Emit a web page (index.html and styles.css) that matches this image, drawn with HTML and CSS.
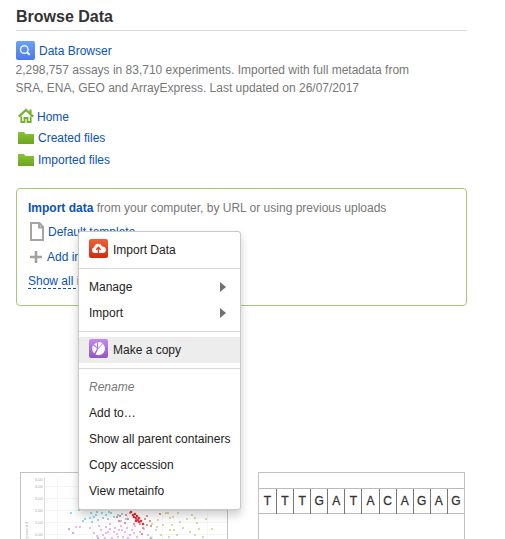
FILE: index.html
```
<!DOCTYPE html>
<html lang="en">
<head>
<meta charset="utf-8">
<title>Browse Data</title>
<link rel="stylesheet" href="styles.css">
</head>
<body>
<main class="page">
  <h1 class="title">Browse Data</h1>
  <div class="browser">
    <svg class="app-icon" viewBox="0 0 19 19"><defs><linearGradient id="blue" x2="0" y2="1"><stop stop-color="#6ba2f5"/><stop offset="1" stop-color="#4b79ed"/></linearGradient></defs><rect width="19" height="19" rx="2" fill="url(#blue)"/><circle cx="8.3" cy="8.5" r="3.8" fill="none" stroke="#eef4ff" stroke-width="1.4"/><path d="M11 11.2l2.7 2.7" stroke="#fff" stroke-width="1.8"/></svg>
    <a class="link">Data Browser</a>
  </div>
  <p class="summary">2,298,757 assays in 83,710 experiments. Imported with full metadata from<br>SRA, ENA, GEO and ArrayExpress. Last updated on 26/07/2017</p>
  <nav class="places">
    <a class="place home"><svg width="16" height="16" viewBox="0 0 16 16"><path d="M.8 8.6L8 2l7.200 6.600M12.500 1.500V5" fill="none" stroke="#74b22b" stroke-width="2.200"/><path d="M3.300 8.500v5.500h3.200v-4h3v4h3.200V8.500" fill="none" stroke="#74b22b" stroke-width="1.800"/></svg>Home</a>
    <a class="place"><svg width="16" height="12" viewBox="0 0 16 12"><defs><linearGradient id="green" x2="0" y2="1"><stop stop-color="#88c434"/><stop offset="1" stop-color="#6da421"/></linearGradient></defs><path d="M0 0h6l1.500 2H16v10H0z" fill="url(#green)"/></svg>Created files</a>
    <a class="place"><svg width="16" height="12" viewBox="0 0 16 12"><path d="M0 0h6l1.500 2H16v10H0z" fill="url(#green)"/></svg>Imported files</a>
  </nav>
  <section class="import-box">
    <p class="import-lead"><a class="link strong">Import data</a> from your computer, by URL or using previous uploads</p>
    <a class="import-row template"><svg width="14" height="19" viewBox="0 0 14 19"><path d="M1 1h8.500L13 5v13H1zM9 1v4.500h4" fill="none" stroke="#a5a5a5" stroke-width="2"/></svg>Default template</a>
    <a class="import-row add"><svg width="12" height="12" viewBox="0 0 12 12"><path d="M6 0v12M0 6h12" stroke="#a3a39e" stroke-width="2.600"/></svg>Add import</a>
    <a class="show-all">Show all imports</a>
    <div class="menu">
      <div class="item"><svg class="app-icon" viewBox="0 0 19 19"><defs><linearGradient id="red" x2="0" y2="1"><stop stop-color="#ed6338"/><stop offset="1" stop-color="#d42a0d"/></linearGradient></defs><rect width="19" height="19" rx="2" fill="url(#red)"/><path d="M5.500 14a2.900 2.900 0 0 1-.3-5.700 4.200 4.200 0 0 1 8-.9 3.300 3.300 0 0 1 .6 6.600z" fill="#fff"/><path d="M9.400 14V9.300M7.200 10.800l2.200-2.500 2.200 2.500" fill="none" stroke="#de421d" stroke-width="1.400"/></svg>Import Data</div>
      <hr>
      <div class="item">Manage<span class="arrow"></span></div>
      <div class="item">Import<span class="arrow"></span></div>
      <hr>
      <div class="item active"><svg class="app-icon" viewBox="0 0 19 19"><defs><linearGradient id="purple" x2="0" y2="1"><stop stop-color="#c58be9"/><stop offset="1" stop-color="#9254c8"/></linearGradient></defs><rect width="19" height="19" rx="2" fill="url(#purple)"/><path d="M9.200 9.800V3.100a6.500 6.500 0 1 1-2.600 12.300z" fill="#fff"/><path d="M8 9.500L4 6.200C2.500 9 3 12.500 5.400 14.600z" fill="#fff"/><path d="M8 8.200L5 5.300 8 3.400z" fill="#fff"/><path d="M9 9.800l4.500-5" stroke="#b47add" stroke-width=".9"/></svg>Make a copy</div>
      <hr>
      <div class="item muted">Rename</div>
      <div class="item">Add to…</div>
      <div class="item">Show all parent containers</div>
      <div class="item">Copy accession</div>
      <div class="item">View metainfo</div>
    </div>
  </section>
  <div class="thumbs">
    <div class="thumb">
      <svg class="scatter" width="206" height="70" viewBox="21 473 206 70">
        <path d="M45 486.500H227M45 498.500H227M45 510.500H227M45 522.500H227M45 534.500H227M57.500 478V543M92.500 478V543M127.500 478V543M162.500 478V543M207.500 478V543" stroke="#f5f5f5"/>
        <path d="M44.500 478V543" stroke="#ddd"/>
        <g class="ticks"><text x="35" y="481">6.00</text><text x="35" y="488">4.00</text><text x="35" y="500">3.00</text><text x="35" y="512">2.00</text><text x="35" y="524">1.00</text><text x="35" y="536">0.00</text><text transform="translate(28 545) rotate(-90)">component 2</text></g>
        <g fill="none" stroke-width="1.900" stroke-linecap="round">
          <path stroke="#6bcbdc" d="M71 513h0M79 510h0M85 519h0M90 518h0M91 513h0M92 522h0M94 517h0M96 515h0M98 520h0M102 513h0M103 518h0M106 515h0M108 519h0M111 513h0M114 517h0M118 515h0M122 514h0M126 519h0M83 521h0M97 512h0M109 512h0M121 521h0"/>
          <path stroke="#ed98dc" d="M76 527h0M80 527h0M90 528h0M94 533h0M97 536h0M101 530h0M103 535h0M106 527h0M108 532h0M110 524h0M112 538h0M115 528h0M117 534h0M119 530h0M121 526h0M123 537h0M125 532h0M127 528h0M130 535h0M132 530h0M135 526h0M137 537h0M140 532h0M144 529h0M99 526h0M105 538h0M114 532h0M128 538h0M148 535h0M110 529h0M118 537h0M122 530h0M106 533h0M134 533h0"/>
          <path stroke="#b58abd" d="M69 529h0M73 533h0M98 538h0"/>
          <path stroke="#cdcb7e" d="M152 524h0M156 530h0M158 520h0M161 535h0M163 525h0M166 513h0M168 513h0M170 518h0M172 525h0M174 530h0M177 535h0M180 522h0M183 528h0M187 519h0M190 532h0M192 515h0M195 535h0M197 523h0M199 529h0M203 537h0M206 519h0M212 529h0M169 537h0M173 517h0M178 513h0M195 518h0M157 527h0M170 530h0"/>
          <path stroke="#e36468" d="M117 517h0M120 516h0M119 521h0M126 515h0M128 519h0M130 513h0M136 520h0M140 524h0M143 528h0M145 519h0M147 525h0M150 521h0M142 534h0M151 526h0M160 514h0M125 523h0M134 524h0M147 516h0"/>
          <path stroke="#dd3038" stroke-width="2.600" d="M131 512h0M133 515h0M134 517h0M136 518h0M138 520h0M135 514h0M137 516h0M139 522h0M141 521h0M143 524h0M139 518h0M136 521h0"/>
          <path stroke="#bbb" stroke-width="3" d="M151 538h0"/>
        </g>
      </svg>
    </div>
    <div class="thumb sequence">
      <div class="bases"><span>T</span><span>T</span><span>T</span><span>G</span><span>A</span><span>T</span><span>A</span><span>C</span><span>A</span><span>G</span><span>A</span><span>G</span></div>
    </div>
  </div>
</main>
</body>
</html>
```
FILE: styles.css
```
* { box-sizing: border-box; }
body {
  margin: 0;
  background: #fff;
  color: #777;
  font: 12px/18px "Liberation Sans", Arial, sans-serif;
}
.page {
  width: 467px;
  height: 539px;
  padding: 7px 0 0 16px;
  overflow: hidden;
}
.title {
  height: 24px;
  margin: 0;
  border-bottom: 1px solid #d9d9d9;
  color: #333;
  font-size: 16px;
  line-height: 20px;
}
.browser {
  display: flex;
  align-items: center;
  height: 19px;
  margin-top: 10px;
  gap: 4px;
}
.app-icon { width: 19px; height: 19px; flex: none; }
.item .app-icon { margin-bottom: 3px; }
.link, .place, .import-row, .show-all { color: #0b52b5; }
.strong { font-weight: bold; }
.summary { margin: 1px 0 0 -0.5px; white-space: nowrap; }
.places { margin: 9px 0 0 2px; }
.place {
  display: flex;
  align-items: center;
  gap: 4px;
  height: 22px;
}
.place svg { margin-bottom: 1px; }
.home { gap: 3px; height: 21px; }
.import-box {
  position: relative;
  display: flex;
  flex-direction: column;
  align-items: flex-start;
  height: 118px;
  margin-top: 17px;
  padding: 10px 11px;
  border: 1px solid #a3ca75;
  border-radius: 4px;
}
.import-lead { margin: 0; }
.import-row { display: flex; align-items: center; white-space: nowrap; }
.template { height: 24px; margin: 3px 0 0 2px; gap: 4px; }
.template svg { margin-bottom: 2px; }
.add { height: 24px; margin: 1px 0 0 2px; gap: 5px; }
.add svg { margin-bottom: 1px; }
.show-all {
  height: 16px;
  margin-top: 4px;
  border-bottom: 1px dashed #0b52b5;
  line-height: 16px;
}
.menu {
  position: absolute;
  top: 42px;
  left: 61px;
  z-index: 1;
  width: 163px;
  padding: 5px 0;
  border: 1px solid #c8c8c8;
  border-radius: 3px;
  background: #fff;
  box-shadow: 0 5px 10px rgba(0, 0, 0, .2);
  color: #222;
}
.menu hr { height: 1px; margin: 5px 0; border: 0; background: #d9d9d9; }
.item {
  display: flex;
  align-items: center;
  gap: 5px;
  height: 26px;
  padding: 0 14px 0 10px;
  white-space: nowrap;
}
.active { background: #ededed; }
.muted { color: #777; font-style: italic; }
.arrow {
  margin-left: auto;
  border: solid transparent;
  border-width: 5px 0 5px 6px;
  border-left-color: #707070;
}
.thumbs { display: flex; gap: 30px; margin: 166px 0 0 4px; }
.thumb {
  width: 208px;
  height: 90px;
  border: 1px solid #c3c3c3;
}
.sequence { width: 207px; }
.scatter { display: block; }
.ticks { fill: #aaa; font-size: 4px; }
.bases {
  display: grid;
  grid-template-columns: 17px repeat(11, 1fr);
  height: 26px;
  margin-top: 15px;
  border: solid #bbb;
  border-width: 1px 0;
  color: #333;
  font-size: 12px;
  line-height: 25px;
  text-align: center;
  -webkit-text-stroke: .3px #333;
}
.bases span + span { border-left: 1px solid #777; }
```
